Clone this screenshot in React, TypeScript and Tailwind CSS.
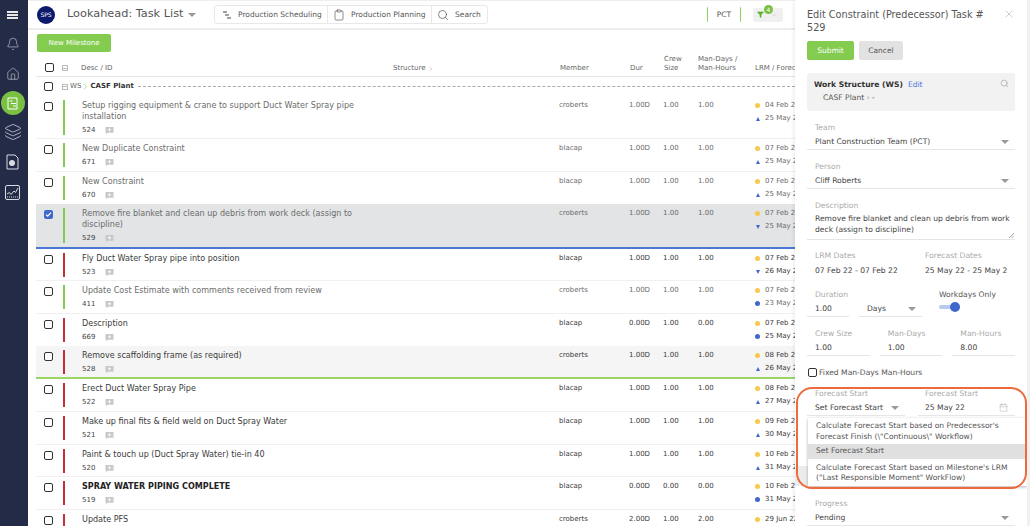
import { Bell, Calendar, ChevronDown, ChevronRight, Clipboard, Filter, Home, Layers, Search, X } from 'lucide-react';

type Marker = 'up' | 'down' | 'dot';

interface Task {
  title: string[];
  id: string;
  member: string;
  dur: string;
  crew: string;
  man: string;
  lrm: string;
  forecast: string;
  marker: Marker;
  late?: boolean;
  bold?: boolean;
  checked?: boolean;
  rowClass: string;
}

const tasks: Task[] = [
  { title: ['Setup rigging equipment & crane to support Duct Water Spray pipe', 'installation'], id: '524', member: 'croberts', dur: '1.00D', crew: '1.00', man: '1.00', lrm: '04 Feb 22', forecast: '25 May 22', marker: 'up', rowClass: 'h-[43px] border-b border-[#f0f0f0]' },
  { title: ['New Duplicate Constraint'], id: '671', member: 'blacap', dur: '1.00D', crew: '1.00', man: '1.00', lrm: '07 Feb 22', forecast: '25 May 22', marker: 'up', rowClass: 'h-[33px] border-b border-[#f0f0f0]' },
  { title: ['New Constraint'], id: '670', member: 'blacap', dur: '1.00D', crew: '1.00', man: '1.00', lrm: '07 Feb 22', forecast: '25 May 22', marker: 'up', rowClass: 'h-[32px]' },
  { title: ['Remove fire blanket and clean up debris from work deck (assign to', 'discipline)'], id: '529', member: 'croberts', dur: '1.00D', crew: '1.00', man: '1.00', lrm: '07 Feb 22', forecast: '25 May 22', marker: 'down', checked: true, rowClass: 'h-[45px] bg-[#e2e4e6] border-b-2 border-[#4a76d4]' },
  { title: ['Fly Duct Water Spray pipe into position'], id: '523', member: 'blacap', dur: '1.00D', crew: '1.00', man: '1.00', lrm: '07 Feb 22', forecast: '26 May 22', marker: 'down', late: true, rowClass: 'h-[32px] border-b border-[#f0f0f0]' },
  { title: ['Update Cost Estimate with comments received from review'], id: '411', member: 'croberts', dur: '1.00D', crew: '1.00', man: '1.00', lrm: '07 Feb 22', forecast: '23 May 22', marker: 'dot', rowClass: 'h-[33px] border-b border-[#f0f0f0]' },
  { title: ['Description'], id: '669', member: 'blacap', dur: '0.00D', crew: '1.00', man: '0.00', lrm: '07 Feb 22', forecast: '25 May 22', marker: 'dot', late: true, rowClass: 'h-[32px]' },
  { title: ['Remove scaffolding frame (as required)'], id: '528', member: 'croberts', dur: '1.00D', crew: '1.00', man: '1.00', lrm: '08 Feb 22', forecast: '26 May 22', marker: 'up', late: true, rowClass: 'h-[33px] bg-[#f5f5f5] border-b-2 border-[#9bd562]' },
  { title: ['Erect Duct Water Spray Pipe'], id: '522', member: 'blacap', dur: '1.00D', crew: '1.00', man: '1.00', lrm: '08 Feb 22', forecast: '27 May 22', marker: 'up', late: true, rowClass: 'h-[33px] border-b border-[#f0f0f0]' },
  { title: ['Make up final fits & field weld on Duct Spray Water'], id: '521', member: 'blacap', dur: '1.00D', crew: '1.00', man: '1.00', lrm: '09 Feb 22', forecast: '30 May 22', marker: 'up', late: true, rowClass: 'h-[33px] border-b border-[#f0f0f0]' },
  { title: ['Paint & touch up (Duct Spray Water) tie-in 40'], id: '520', member: 'blacap', dur: '1.00D', crew: '1.00', man: '1.00', lrm: '10 Feb 22', forecast: '31 May 22', marker: 'up', late: true, rowClass: 'h-[32px] border-b border-[#f0f0f0]' },
  { title: ['SPRAY WATER PIPING COMPLETE'], id: '519', member: 'blacap', dur: '0.00D', crew: '0.00', man: '0.00', lrm: '10 Feb 22', forecast: '31 May 22', marker: 'dot', late: true, bold: true, rowClass: 'h-[33px] border-b border-[#f0f0f0]' },
  { title: ['Update PFS'], id: '', member: 'croberts', dur: '2.00D', crew: '1.00', man: '2.00', lrm: '29 Jun 22', forecast: '', marker: 'up', late: true, rowClass: 'h-[33px]' },
];

function Box({ checked = false }: { checked?: boolean }) {
  if (checked) {
    return (
      <span className="flex h-[9px] w-[9px] items-center justify-center rounded-[2px] bg-[#3f67cc]">
        <svg width="7" height="7" viewBox="0 0 7 7" fill="none" stroke="#fff" strokeWidth="1.2">
          <path d="M1 3.6l1.7 1.6L6 1.6" />
        </svg>
      </span>
    );
  }
  return <span className="block h-[9px] w-[9px] rounded-[2px] border-[1.5px] border-[#333] bg-white" />;
}

function MinusBox() {
  return (
    <span className="flex h-[6px] w-[6px] items-center justify-center border border-[#bbb]">
      <span className="h-px w-[4px] bg-[#bbb]" />
    </span>
  );
}

function Caret() {
  return <span className="h-0 w-0 border-x-[4px] border-t-[4px] border-x-transparent border-t-[#999]" />;
}

function CommentIcon() {
  return (
    <svg width="9" height="9" viewBox="0 0 10 10">
      <path d="M0.5 1h9v6.5H3L1.5 9.5V7.5h-1z" fill="#c9c9c9" />
      <path d="M5 2.5v3.5M3.2 4.2h3.6" stroke="#fff" strokeWidth="0.9" />
    </svg>
  );
}

function MarkerIcon({ kind }: { kind: Marker }) {
  if (kind === 'dot') return <span className="block h-[5px] w-[5px] rounded-full bg-[#3f67cc]" />;
  if (kind === 'up') return <span className="h-0 w-0 border-x-[2.5px] border-b-[4px] border-x-transparent border-b-[#3f67cc]" />;
  return <span className="h-0 w-0 border-x-[2.5px] border-t-[4px] border-x-transparent border-t-[#3f67cc]" />;
}

function TaskRow({ task }: { task: Task }) {
  const color = task.late ? 'text-[#3a3a3a]' : 'text-[#6b6b6b]';
  return (
    <div className={`flex shrink-0 items-start pt-[4px] ${task.rowClass} ${color}`}>
      <div className="w-[27px] shrink-0 pt-[2px] pl-[8px]">
        <Box checked={task.checked} />
      </div>
      <div className={`w-[2px] shrink-0 ${task.late ? 'bg-[#c62f2f]' : 'bg-[#84cc50]'} ${task.title.length > 1 ? 'h-[35px]' : 'h-[24px]'}`} />
      <div className="ml-[17px] w-[477px] shrink-0">
        {task.title.map(line => (
          <div key={line} className={`h-[11px] whitespace-nowrap text-[8.05px] leading-[11px] ${task.bold ? 'font-bold text-[#222]' : ''}`}>{line}</div>
        ))}
        <div className="mt-[2px] flex h-[12px] items-center gap-[10px] text-[7px] text-[#444]">
          <span>{task.id}</span>
          <CommentIcon />
        </div>
      </div>
      <div className="w-[70px] shrink-0 text-[7px] leading-[11px]">{task.member}</div>
      <div className="w-[34px] shrink-0 text-[7px] leading-[11px]">{task.dur}</div>
      <div className="w-[35px] shrink-0 text-[7px] leading-[11px]">{task.crew}</div>
      <div className="w-[57px] shrink-0 text-[7px] leading-[11px]">{task.man}</div>
      <div className="shrink-0 whitespace-nowrap text-[7px] leading-[11px]">
        <div className="flex h-[11px] items-center gap-[5px]">
          <span className="block h-[5px] w-[5px] rounded-full bg-[#f8c84a]" />
          {task.lrm}
        </div>
        <div className="mt-[2px] flex h-[11px] items-center gap-[5px]">
          <span className="flex w-[5px] justify-center"><MarkerIcon kind={task.marker} /></span>
          {task.forecast}
        </div>
      </div>
    </div>
  );
}

function Field({ label, value, caret, className = '' }: { label: string; value: string; caret?: boolean; className?: string }) {
  return (
    <div className={className}>
      <div className="h-[13px] pl-[8px] text-[7.6px] leading-[13px] text-[#aaa]">{label}</div>
      <div className="flex h-[16px] items-center justify-between border-b border-[#e6e6e6] pr-[6px] pl-[8px] text-[7.6px] text-[#444]">
        <span className="whitespace-nowrap">{value}</span>
        {caret && <Caret />}
      </div>
    </div>
  );
}

function Sidebar() {
  return (
    <div className="flex h-full w-[28px] shrink-0 flex-col items-center bg-[#232b47] pt-[11px] pr-[3px] text-[#d8dbe4]">
      <div className="flex flex-col gap-[1px]">
        <span className="h-[2px] w-[11px] bg-[#e8e8e8]" />
        <span className="h-[2px] w-[11px] bg-[#e8e8e8]" />
        <span className="h-[2px] w-[11px] bg-[#e8e8e8]" />
      </div>
      <Bell size={14} strokeWidth={1} className="mt-[18px]" />
      <Home size={14} strokeWidth={1} className="mt-[16px]" />
      <div className="mt-[10px] flex h-[24px] w-[24px] shrink-0 items-center justify-center rounded-full bg-[#7ac143]">
        <svg width="13" height="13" viewBox="0 0 13 13" fill="none" stroke="#fff" strokeWidth="1">
          <path d="M2 1h9v11H2z" />
          <path d="M3.5 4h3M5 6.5h5M7 9h3" strokeWidth="1.2" />
        </svg>
      </div>
      <Layers size={18} strokeWidth={1} className="mt-[8px]" />
      <svg width="15" height="16" viewBox="0 0 15 16" fill="none" stroke="#d8dbe4" strokeWidth="1" className="mt-[13px]">
        <path d="M2 1h8l3 3v11H2z" />
        <circle cx="7" cy="9" r="2.6" fill="#d8dbe4" />
      </svg>
      <svg width="15" height="15" viewBox="0 0 15 15" fill="none" stroke="#d8dbe4" strokeWidth="1" className="mt-[15px]">
        <rect x="0.5" y="0.5" width="14" height="14" rx="1.5" />
        <path d="M2 9l2.5-1.5L6 9.5 9 6l1.5 1.5L13 3" />
        <path d="M2 12h11" strokeDasharray="1 1" />
      </svg>
    </div>
  );
}

function TopBar() {
  return (
    <div className="flex h-[30px] shrink-0 items-center border-t border-b-2 border-t-[#eeeeee] border-b-[#ececec] pr-[12px] pl-[9px]">
      <div className="flex h-[18px] w-[18px] items-center justify-center rounded-full bg-[#0c1a6b] text-[6px] text-white">SPS</div>
      <span className="ml-[12px] w-[116px] shrink-0 text-[11.3px] whitespace-nowrap text-[#555]">Lookahead: Task List</span>
      <span className="ml-[5px] flex"><Caret /></span>
      <div className="ml-[18px] flex h-[19px] items-center rounded-[3px] border border-[#e8e8e8] text-[7.5px] whitespace-nowrap text-[#555]">
        <div className="flex h-full w-[113px] items-center gap-[6px] border-r border-[#e8e8e8] pl-[7px]">
          <svg width="10" height="10" viewBox="0 0 10 10" stroke="#444" strokeWidth="1.2">
            <path d="M1 2h4M3 5h4M5 8h4" />
          </svg>
          Production Scheduling
        </div>
        <div className="flex h-full w-[104px] items-center gap-[6px] border-r border-[#e8e8e8] pl-[5px]">
          <Clipboard size={12} strokeWidth={1.2} className="text-[#444]" />
          Production Planning
        </div>
        <div className="flex h-full w-[55px] items-center gap-[6px] pl-[5px]">
          <Search size={12} strokeWidth={1.3} className="text-[#444]" />
          Search
        </div>
      </div>
      <div className="ml-auto flex h-[15px] w-[34px] items-center justify-center rounded-[1px] border-x-[1.5px] border-[#8ed05a] text-[7.5px] text-[#555]">PCT</div>
      <div className="relative ml-[12px] flex h-[14px] w-[30px] items-center rounded-[2px] bg-[#f0f0f0] pl-[4px]">
        <Filter size={7} fill="#5fb52f" className="text-[#5fb52f]" />
        <ChevronDown size={8} strokeWidth={1} className="ml-[6px] text-[#aaa]" />
        <span className="absolute -top-[3px] left-[11px] flex h-[9px] w-[9px] items-center justify-center rounded-full bg-[#7ac143] text-[6px] text-white">4</span>
      </div>
    </div>
  );
}

function TaskTable() {
  return (
    <div className="min-h-0 flex-1 overflow-hidden pl-[8px]">
      <button className="mt-[4px] ml-[1px] flex h-[18px] w-[74px] items-center justify-center rounded-[2px] bg-[#84cc50] text-[7px] text-white">New Milestone</button>
      <div className="flex h-[25px] items-end border-b border-[#e4e4e4] pb-[3px] text-[7px] leading-[9px] whitespace-nowrap text-[#666]">
        <span className="mb-[1px] ml-[9px] shrink-0"><Box /></span>
        <span className="mb-[2px] ml-[8px] shrink-0"><MinusBox /></span>
        <span className="ml-[13px] w-[312px] shrink-0">Desc / ID</span>
        <span className="flex w-[167px] shrink-0 items-center">Structure <ChevronRight size={8} strokeWidth={1} className="ml-[1px] text-[#888]" /></span>
        <span className="w-[70px] shrink-0">Member</span>
        <span className="w-[34px] shrink-0">Dur</span>
        <span className="w-[34px] shrink-0">Crew<br />Size</span>
        <span className="w-[57px] shrink-0">Man-Days /<br />Man-Hours</span>
        <span className="shrink-0">LRM / Forecast</span>
      </div>
      <div className="flex h-[19px] items-center text-[7px] text-[#666]">
        <span className="ml-[8px]"><Box /></span>
        <span className="ml-[9px]"><MinusBox /></span>
        <span className="ml-[2px]">WS</span>
        <ChevronRight size={9} strokeWidth={1.6} className="text-[#7ac143]" />
        <span className="font-bold text-[#333]">CASF Plant</span>
        <span className="ml-[4px] flex-1 border-b border-dashed border-[#aaa]" />
      </div>
      {tasks.map(task => (
        <TaskRow key={task.title[0]} task={task} />
      ))}
    </div>
  );
}

function EditPanel() {
  return (
    <div className="relative h-full w-[235px] shrink-0 overflow-hidden border-r-[3px] border-[#f0f0f0] bg-white pt-[8px] pl-[12px] shadow-[-2px_0_3px_rgba(0,0,0,0.06)]">
      <div className="flex items-start pr-[12px]">
        <div className="w-[190px] text-[9.7px] leading-[13px] text-[#555]">Edit Constraint (Predecessor) Task # 529</div>
        <X size={12} strokeWidth={1} className="ml-[6px] text-[#999]" />
      </div>
      <div className="mt-[7px] flex gap-[5px] text-[7.5px]">
        <button className="h-[19px] w-[47px] rounded-[2px] bg-[#84cc50] text-white">Submit</button>
        <button className="h-[19px] w-[44px] rounded-[2px] bg-[#e2e2e2] text-[#555]">Cancel</button>
      </div>
      <div className="relative mt-[13px] mr-[12px] h-[38px] rounded-[3px] bg-[#f2f2f2] pt-[5px] pl-[7px] text-[7.6px] leading-[13px]">
        <div><span className="font-bold text-[#333]">Work Structure (WS)</span><span className="ml-[5px] text-[#4a76d4]">Edit</span></div>
        <div className="ml-[9px] text-[#555]">CASF Plant <span className="text-[#999]">›</span> -</div>
        <Search size={9} className="absolute top-[6px] right-[6px] text-[#aaa]" />
      </div>
      <div className="mr-[12px] flex flex-col gap-[10px] pt-[10px]">
        <Field label="Team" value="Plant Construction Team (PCT)" caret />
        <Field label="Person" value="Cliff Roberts" caret />
        <div>
          <div className="h-[13px] pl-[8px] text-[7.6px] leading-[13px] text-[#aaa]">Description</div>
          <div className="relative h-[28px] border-b border-[#e6e6e6] pt-[1px] pl-[8px] text-[7.6px] leading-[11px] whitespace-nowrap text-[#444]">
            Remove fire blanket and clean up debris from work<br />deck (assign to discipline)
            <svg width="5" height="5" viewBox="0 0 5 5" stroke="#888" strokeWidth="0.7" className="absolute right-[1px] bottom-[1px]">
              <path d="M0 5L5 0M2.5 5L5 2.5" />
            </svg>
          </div>
        </div>
      </div>
      <div className="mt-[9px] flex h-[27px] pl-[8px] text-[7.6px] leading-[13px]">
        <div className="w-[110px]">
          <div className="text-[#aaa]">LRM Dates</div>
          <div className="mt-[2px] text-[#444]">07 Feb 22 - 07 Feb 22</div>
        </div>
        <div className="w-[82px] overflow-hidden">
          <div className="text-[#aaa]">Forecast Dates</div>
          <div className="mt-[2px] whitespace-nowrap text-[#444]">25 May 22 - 25 May 22</div>
        </div>
      </div>
      <div className="mt-[12px] flex">
        <Field label="Duration" value="1.00" className="w-[42px]" />
        <Field label="&nbsp;" value="Days" caret className="ml-[10px] w-[63px]" />
        <div className="ml-[17px] text-[7.6px] leading-[13px] text-[#555]">
          Workdays Only
          <div className="relative mt-[1px] h-[10px] w-[21px]">
            <span className="absolute top-[3px] left-0 h-[4px] w-[18px] rounded-full bg-[#b9c8ee]" />
            <span className="absolute top-0 right-0 h-[10px] w-[10px] rounded-full bg-[#3f67cc]" />
          </div>
        </div>
      </div>
      <div className="mt-[10px] mr-[12px] flex gap-[10px]">
        <Field label="Crew Size" value="1.00" className="flex-1" />
        <Field label="Man-Days" value="1.00" className="flex-1" />
        <Field label="Man-Hours" value="8.00" className="flex-1" />
      </div>
      <div className="mt-[11px] flex h-[11px] items-center gap-[2px] pl-[1px] text-[7.6px] leading-[11px] text-[#555]">
        <Box />
        Fixed Man-Days Man-Hours
      </div>
      <div className="mt-[9px] mr-[12px] flex">
        <Field label="Forecast Start" value="Set Forecast Start" caret className="w-[98px]" />
        <div className="ml-[13px] flex-1">
          <div className="h-[13px] pl-[7px] text-[7.6px] leading-[13px] text-[#aaa]">Forecast Start</div>
          <div className="flex h-[16px] items-center justify-between border-b border-[#e6e6e6] pr-[7px] pl-[7px] text-[7.6px] text-[#444]">
            25 May 22
            <Calendar size={9} strokeWidth={1} className="text-[#999]" />
          </div>
        </div>
      </div>
      <div className="mt-[50px] -ml-[12px] h-[20px] bg-[#ececec]" />
      <Field label="Progress" value="Pending" caret className="mt-[11px] mr-[12px]" />
      <div className="absolute top-[418px] left-[13px] w-[219px] bg-white text-[7.6px] leading-[10.5px] whitespace-nowrap text-[#555] shadow-[0_1px_3px_rgba(0,0,0,0.3)]">
        <div className="px-[8px] pt-[3px] pb-[2px]">Calculate Forecast Start based on Predecessor's<br />Forecast Finish (\"Continuous\" Workflow)</div>
        <div className="flex h-[15px] items-center bg-[#e0e0e0] px-[8px]">Set Forecast Start</div>
        <div className="px-[8px] pt-[3.5px] pb-[2.5px]">Calculate Forecast Start based on Milestone's LRM<br />("Last Responsible Moment" WorkFlow)</div>
      </div>
      <div className="absolute top-[387px] left-[1px] h-[102px] w-[231px] rounded-[16px] border-2 border-[#ec6a3c]" />
    </div>
  );
}

export default function App() {
  return (
    <div className="flex h-[526px] w-[1030px] overflow-hidden bg-white font-['DejaVu_Sans',sans-serif]">
      <Sidebar />
      <div className="flex min-w-0 flex-1 flex-col">
        <TopBar />
        <TaskTable />
      </div>
      <EditPanel />
    </div>
  );
}
